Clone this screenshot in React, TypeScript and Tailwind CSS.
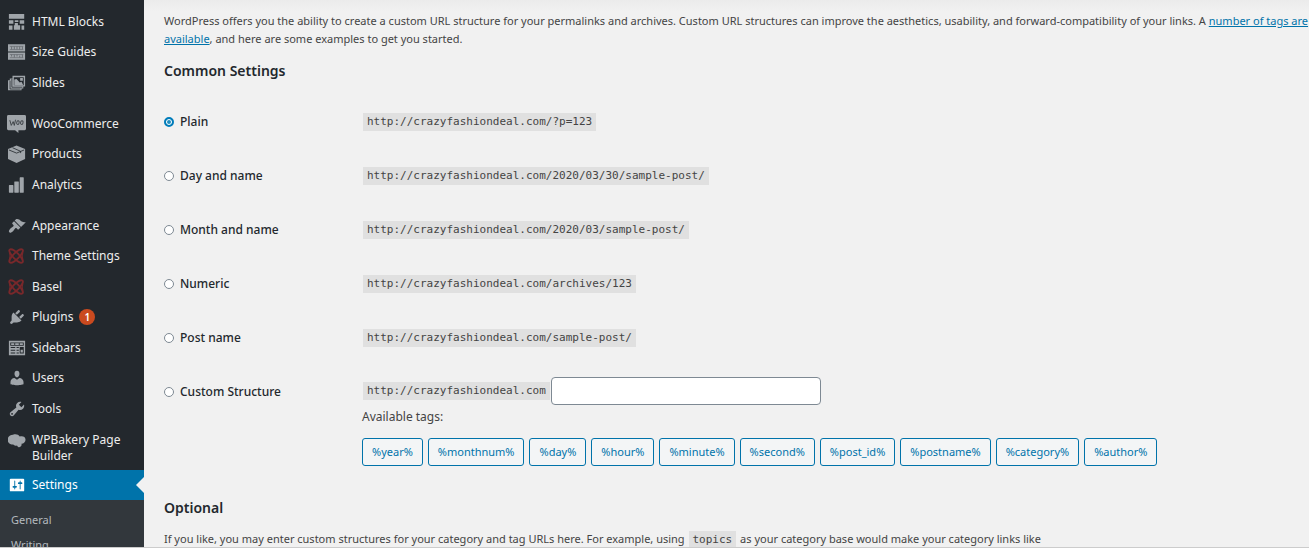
import React from "react";
import { clsx } from "clsx";

interface MenuItem {
  name: string;
  icon: React.ReactNode;
  badge?: number;
}

interface Structure {
  id: string;
  label: string;
  example: string;
}

const SITE_URL = "http://crazyfashiondeal.com";

const STRUCTURES: Structure[] = [
  { id: "plain", label: "Plain", example: "/?p=123" },
  { id: "day", label: "Day and name", example: "/2020/03/30/sample-post/" },
  { id: "month", label: "Month and name", example: "/2020/03/sample-post/" },
  { id: "numeric", label: "Numeric", example: "/archives/123" },
  { id: "post", label: "Post name", example: "/sample-post/" },
];

const TAGS = [
  "%year%",
  "%monthnum%",
  "%day%",
  "%hour%",
  "%minute%",
  "%second%",
  "%post_id%",
  "%postname%",
  "%category%",
  "%author%",
];

function Icon({ children }: { children: React.ReactNode }) {
  return (
    <svg
      viewBox="0 0 20 20"
      className="size-[18px] shrink-0"
      fill="currentColor"
      aria-hidden="true"
    >
      {children}
    </svg>
  );
}

const BlocksIcon = (
  <Icon>
    <path d="M1 1h17v5.500H1zM1 8h5v4H1zM7.500 8h4v2h-4zM13 8h5v4h-5zM1 14h4v4.500H1zM7.500 11h3.500v2.500h2.500v5H6.500v-5h1zM15 14h3v4.500h-3z" />
  </Icon>
);

const SizeIcon = (
  <Icon>
    <path d="M0 1.500h19v8H0zM0 10.500h19v8H0z" />
    <g stroke="#23282d" strokeWidth="0.800" opacity="0.600">
      <path d="M2 3.800h15M2 7.300h15M2 12.800h15M2 16.300h15" strokeWidth="0.600" />
      <path d="M4 4v3M7 4v3M10 4v3M13 4v3M16 4v3M4 13v2M7 13v3M10 13v2M13 14v2M16 13v3" />
    </g>
  </Icon>
);

const SlidesIcon = (
  <Icon>
    <path
      fillRule="evenodd"
      d="M5 2h14v12h-2v2h-2v2H0V7h2V5h3zM17.500 12.500v-9h-11v9z"
    />
    <path d="M7 12.500V6l2.500-.500 3.500 4 2-1 2 4zM13.500 4.500h3v3h-3z" />
    <path
      d="M4.300 5.500v9.200H16M2.300 7.500v9.200H14"
      fill="none"
      stroke="#23282d"
      strokeWidth="0.800"
    />
  </Icon>
);

const WooIcon = (
  <svg
    viewBox="0 0 20 20"
    className="-ml-px size-[19px] shrink-0"
    fill="currentColor"
    aria-hidden="true"
  >
    <path d="M1.500 1h17q1.500 0 1.500 1.500v13q0 1.500-1.500 1.500H12v3l-3.500-3h-7Q0 17 0 15.500v-13Q0 1 1.500 1z" />
    <g fill="none" stroke="#3c4146" strokeWidth="1">
      <path d="M3 6.500 4.500 12l2-4 1.200 4L9 6" />
      <ellipse cx="11.500" cy="9" rx="1.300" ry="2" transform="rotate(12 11.500 9)" />
      <ellipse cx="15.600" cy="9" rx="1.300" ry="2" transform="rotate(12 15.600 9)" />
    </g>
  </svg>
);

const ProductsIcon = (
  <Icon>
    <path d="M9.500 0.500l9.500 4v11l-9.500 4.500L0 15.500v-11z" />
    <path
      d="M1 5.500 9.500 9 18 5.500M5 3l9 4v2"
      fill="none"
      stroke="#23282d"
      strokeWidth="0.900"
    />
  </Icon>
);

const AnalyticsIcon = (
  <Icon>
    <path d="M1.500 10h4q.5 0 .5.500V18q0 .5-.5.500h-4Q1 18.500 1 18v-7.500q0-.5.500-.5zM7.500 6h4q.5 0 .5.500V18q0 .5-.5.500h-4Q7 18.500 7 18V6.500Q7 6 7.500 6zM13.500 1.500h3.500q.5 0 .5.500v16q0 .5-.5.500h-3.500q-.5 0-.5-.5V2q0-.5.500-.5z" />
  </Icon>
);

const AppearanceIcon = (
  <Icon>
    <path d="M14.480 11.060L7.410 3.990l1.500-1.500c.5-.56 2.300-.47 3.510.32 1.210.8 1.430 1.280 2.910 2.100 1.180.64 2.450 1.260 4.450.85zm-.71.71L6.700 4.700 4.930 6.470c-.39.39-.39 1.020 0 1.410l1.060 1.060c.39.39.39 1.030 0 1.420-.6.6-1.430 1.110-2.210 1.690-.35.26-.7.53-1.010.84C1.430 14.230.4 16.080 1.400 17.070c.99 1 2.840-.03 4.180-1.360.31-.31.58-.66.85-1.020.57-.78 1.080-1.610 1.690-2.210.39-.39 1.020-.39 1.410 0l1.060 1.060c.39.39 1.020.39 1.410 0z" />
  </Icon>
);

const BaselIcon = (
  <Icon>
    <g fill="none" stroke="#79282b" strokeWidth="2">
      <ellipse cx="9" cy="10" rx="10" ry="3.300" transform="rotate(45 9 10)" />
      <ellipse cx="9" cy="10" rx="10" ry="3.300" transform="rotate(-45 9 10)" />
      <path d="M1.500 6.500q1.500 3.500 0 7M16.500 6.500q-1.500 3.500 0 7" strokeWidth="1.200" />
    </g>
  </Icon>
);

const PluginsIcon = (
  <Icon>
    <path d="M13.110 4.360L9.870 7.600 8 5.730l3.240-3.240c.35-.34 1.050-.2 1.560.32.52.51.66 1.210.31 1.550zm-8 1.770l.91-1.120 9.010 9.010-1.190.84c-.71.71-2.630 1.160-3.820 1.160H6.140L4.900 17.260c-.59.59-1.540.59-2.120 0-.59-.58-.59-1.530 0-2.120l1.240-1.240v-3.880c0-1.130.4-3.190 1.090-3.890zm7.260 3.970l3.240-3.240c.34-.35 1.040-.21 1.550.31.52.51.66 1.210.31 1.550l-3.240 3.250z" />
  </Icon>
);

const SidebarsIcon = (
  <Icon>
    <path
      fillRule="evenodd"
      d="M1 2h18v16H1zM2.500 4v3.500h15V4zM3 9v1h5V9zM3 12v1h5v-1zM3 15v1h5v-1zM9.500 9v1H12V9zM9.500 12v1H12v-1zM9.500 15v1H12v-1zM13 9v7h4.500V9z"
    />
    <path d="M3.500 4.800h3.500v2H3.500zM8 4.800h4v2H8zM13 4.800h3.500v2H13zM14 12h2.500v3H14z" />
  </Icon>
);

const UsersIcon = (
  <Icon>
    <path d="M10 9.250c-2.270 0-2.730-3.440-2.730-3.440C7 4.020 7.820 2 9.970 2c2.160 0 2.980 2.020 2.710 3.810 0 0-.41 3.440-2.680 3.440zm0 2.570L12.720 10c2.390 0 4.520 2.330 4.520 4.530v2.490s-3.650 1.130-7.240 1.130c-3.650 0-7.240-1.130-7.240-1.130v-2.490c0-2.250 1.940-4.480 4.470-4.480z" />
  </Icon>
);

const ToolsIcon = (
  <Icon>
    <path d="M16.680 9.770c-1.340 1.340-3.300 1.670-4.950.99l-5.410 6.520c-.99.99-2.590.99-3.580 0s-.99-2.590 0-3.570l6.520-5.420c-.68-1.650-.35-3.610.99-4.950 1.280-1.280 3.120-1.620 4.720-1.060l-2.890 2.890 2.820 2.820 2.860-2.870c.53 1.580.18 3.390-1.080 4.650zM3.810 16.210c.4.39 1.040.39 1.430 0 .4-.4.4-1.040 0-1.430-.39-.4-1.030-.4-1.430 0-.39.39-.39 1.030 0 1.430z" />
  </Icon>
);

const BakeryIcon = (
  <Icon>
    <path d="M5.500 3c3-1 6-.500 7.500 2 3-1 6.500 0 6.500 3.500 0 2.500-2 4.500-4.500 4.500.500 2-.5 3.500-2.500 4-1 0-2-1-2.500-2-2 .500-3.500 0-4-1-3.500 0-6.500-2-6.500-5.500 0-3 3-5.500 6-5.500z" />
  </Icon>
);

const SettingsIcon = (
  <Icon>
    <path d="M18 16V4c0-.55-.45-1-1-1H3c-.55 0-1 .45-1 1v12c0 .55.45 1 1 1h14c.55 0 1-.45 1-1zM8 11h1c.55 0 1 .45 1 1s-.45 1-1 1H8v1.500c0 .28-.22.5-.5.500s-.5-.22-.5-.5V13H6c-.55 0-1-.45-1-1s.45-1 1-1h1V5.500c0-.28.22-.5.500-.5s.5.220.5.500V11zm5-2h-1c-.55 0-1-.45-1-1s.45-1 1-1h1V5.500c0-.28.22-.5.500-.5s.5.220.5.500V7h1c.55 0 1 .45 1 1s-.45 1-1 1h-1v5.500c0 .28-.22.5-.5.500s-.5-.22-.5-.5V9z" />
  </Icon>
);

const MENU_GROUPS: MenuItem[][] = [
  [
    { name: "HTML Blocks", icon: BlocksIcon },
    { name: "Size Guides", icon: SizeIcon },
    { name: "Slides", icon: SlidesIcon },
  ],
  [
    { name: "WooCommerce", icon: WooIcon },
    { name: "Products", icon: ProductsIcon },
    { name: "Analytics", icon: AnalyticsIcon },
  ],
  [
    { name: "Appearance", icon: AppearanceIcon },
    { name: "Theme Settings", icon: BaselIcon },
    { name: "Basel", icon: BaselIcon },
    { name: "Plugins", icon: PluginsIcon, badge: 1 },
    { name: "Sidebars", icon: SidebarsIcon },
    { name: "Users", icon: UsersIcon },
    { name: "Tools", icon: ToolsIcon },
  ],
];

function Sidebar() {
  return (
    <nav className="w-36 shrink-0 bg-[#23282d] pt-1.5 text-xs leading-4 text-[#eee]">
      <div className="flex flex-col gap-2.5">
        {MENU_GROUPS.map((group, index) => (
          <ul key={index}>
            {group.map((item) => (
              <li key={item.name} className="odd:h-[31px] even:h-[30px]">
                <a href="#" className="flex h-full items-center gap-1.5 pl-2">
                  <span className="text-[#a0a5aa]">{item.icon}</span>
                  <span>{item.name}</span>
                  {item.badge && (
                    <span className="size-4 rounded-full bg-[#ca4a1f] text-center text-[10px] font-semibold text-white">
                      {item.badge}
                    </span>
                  )}
                </a>
              </li>
            ))}
          </ul>
        ))}
      </div>

      <a href="#" className="flex gap-1.5 pt-2 pb-1.5 pl-2">
        <span className="text-[#a0a5aa]">{BakeryIcon}</span>
        <span>WPBakery Page Builder</span>
      </a>

      {/* Current page */}
      <a
        href="#"
        className="relative flex h-[30px] items-center gap-1.5 bg-[#0073aa] pl-2 text-white"
      >
        {SettingsIcon}
        <span>Settings</span>
        <span className="absolute top-1/2 right-0 -translate-y-1/2 border-y-8 border-r-8 border-y-transparent border-r-[#f1f1f1]" />
      </a>
      <ul className="bg-[#32373c] px-[11px] pt-[7px] text-[11px] leading-[25px] text-[#b4b9be]">
        <li>
          <a href="#">General</a>
        </li>
        <li>
          <a href="#">Writing</a>
        </li>
      </ul>
    </nav>
  );
}

function Code({ children }: { children: React.ReactNode }) {
  return (
    <code className="mx-px inline-block bg-[#e0e0e0] px-1 font-['DejaVu_Sans_Mono',monospace] text-[11px] leading-[18px]">
      {children}
    </code>
  );
}

function StructureRadio({
  id,
  label,
  checked,
}: {
  id: string;
  label: string;
  checked?: boolean;
}) {
  return (
    <label className="flex items-center gap-1.5 text-xs leading-[18px] font-medium text-[#23282d]">
      <input
        type="radio"
        name="structure"
        value={id}
        defaultChecked={checked}
        className={clsx(
          "size-2.5 appearance-none rounded-full border border-[#7e8993] bg-white",
          "checked:border-2 checked:border-[#007cba] checked:bg-[#1e8cbe] checked:shadow-[inset_0_0_0_1px_#fff]"
        )}
      />
      {label}
    </label>
  );
}

export default function App() {
  return (
    <div className="flex h-screen flex-col overflow-hidden bg-white font-['Noto_Sans',sans-serif]">
      <div className="flex min-h-0 flex-1 overflow-hidden border-b border-[#ccc] bg-[#f1f1f1]">
        <Sidebar />

        <main className="min-w-0 flex-1 text-[11px] leading-[18px] text-[#444]">
          <div className="h-3 bg-linear-to-b from-[#ebebeb] to-[#f1f1f1]" />
          <div className="pl-5">
            <p>
              WordPress offers you the ability to create a custom URL structure
              for your permalinks and archives. Custom URL structures can
              improve the aesthetics, usability, and forward-compatibility of
              your links. A{" "}
              <a href="#" className="text-[#0073aa] underline">
                number of tags are available
              </a>
              , and here are some examples to get you started.
            </p>

            <h2 className="mt-3 text-sm leading-[22px] font-semibold text-[#23282d]">
              Common Settings
            </h2>

            <table className="mt-3 text-left">
              <tbody>
                {STRUCTURES.map((item) => (
                  <tr key={item.id} className="h-[54px]">
                    <th className="w-[198px] pt-0.5">
                      <StructureRadio
                        id={item.id}
                        label={item.label}
                        checked={item.id === "plain"}
                      />
                    </th>
                    <td>
                      <Code>
                        {SITE_URL}
                        {item.example}
                      </Code>
                    </td>
                  </tr>
                ))}
                <tr>
                  <th className="w-[198px] pt-[19px] align-top">
                    <StructureRadio id="custom" label="Custom Structure" />
                  </th>
                  <td className="pt-[13px]">
                    <div className="flex items-center">
                      <Code>{SITE_URL}</Code>
                      <input
                        type="text"
                        aria-label="Custom structure"
                        className="h-7 w-[270px] rounded border border-[#7e8993] bg-white px-2"
                      />
                    </div>
                    <p className="mt-[3px] text-xs leading-[18px]">
                      Available tags:
                    </p>
                    <div className="mt-3 flex flex-wrap gap-[5px]">
                      {TAGS.map((tag) => (
                        <button
                          key={tag}
                          type="button"
                          className="h-7 rounded-[3px] border border-[#0073aa] bg-[#f3f5f6] px-[9px] text-[#0073aa]"
                        >
                          {tag}
                        </button>
                      ))}
                    </div>
                  </td>
                </tr>
              </tbody>
            </table>

            <h2 className="mt-[31px] text-sm leading-[22px] font-semibold text-[#23282d]">
              Optional
            </h2>
            <p className="mt-[11px]">
              If you like, you may enter custom structures for your category and
              tag URLs here. For example, using <Code>topics</Code> as your
              category base would make your category links like
            </p>
          </div>
        </main>
      </div>
      <div className="h-0.5 shrink-0" />
    </div>
  );
}
